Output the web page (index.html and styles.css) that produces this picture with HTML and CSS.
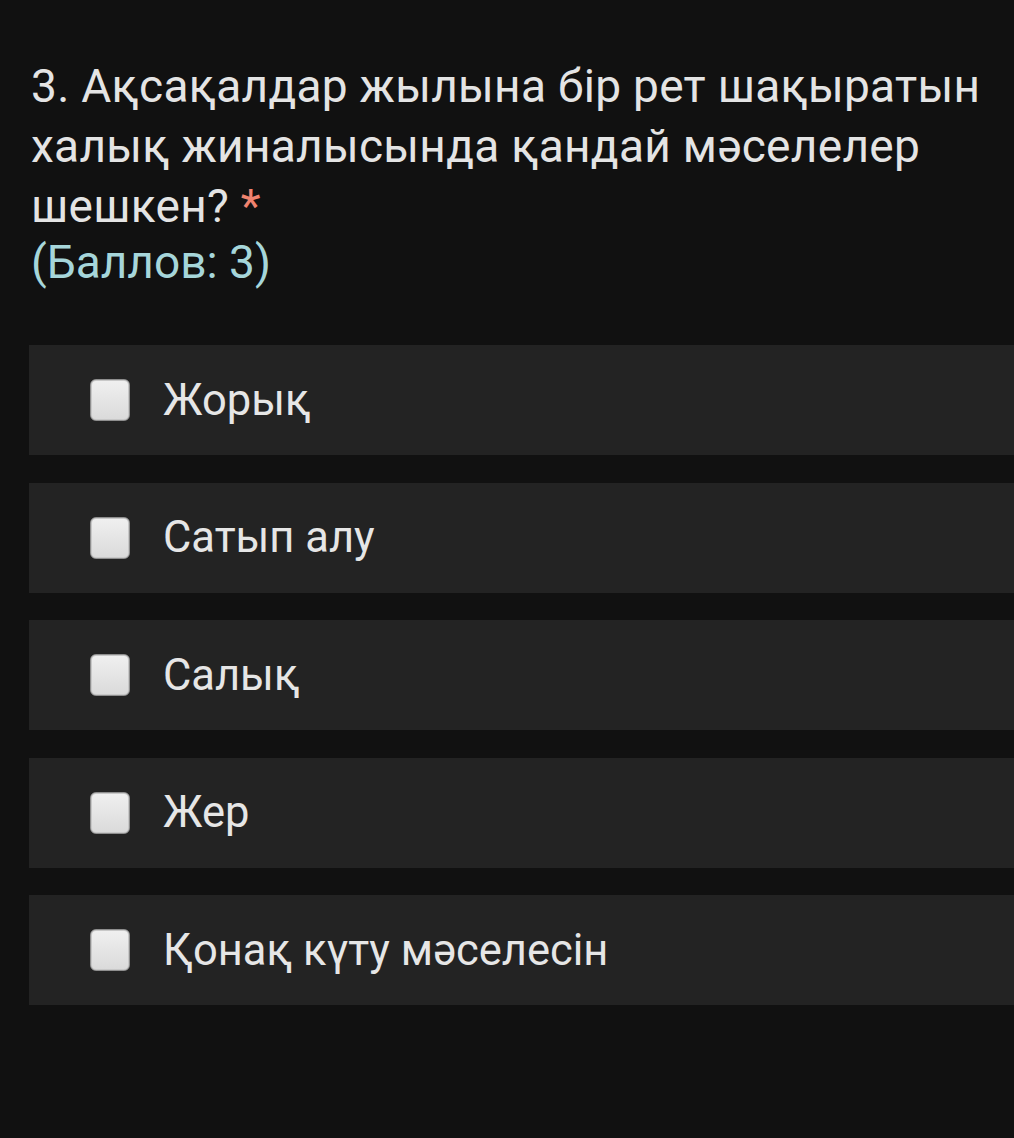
FILE: index.html
```html
<!DOCTYPE html>
<html lang="kk">
<head>
<meta charset="utf-8">
<link rel="stylesheet" href="styles.css">
</head>
<body>
<div class="question">
  <div class="title">3. Ақсақалдар жылына бір рет шақыратын халық жиналысында қандай мәселелер шешкен? <span class="req">*</span></div>
  <div class="points">(Баллов: 3)</div>
</div>
<div class="options">
  <label class="option"><span class="box"></span><span class="text">Жорық</span></label>
  <label class="option"><span class="box"></span><span class="text">Сатып алу</span></label>
  <label class="option"><span class="box"></span><span class="text">Салық</span></label>
  <label class="option"><span class="box"></span><span class="text">Жер</span></label>
  <label class="option"><span class="box"></span><span class="text">Қонақ күту мәселесін</span></label>
</div>
</body>
</html>
```

FILE: styles.css
```css
html, body {
  margin: 0;
  padding: 0;
  background: #111111;
  width: 1014px;
  height: 1138px;
  overflow: hidden;
}
body {
  font-family: Roboto, "Noto Sans", sans-serif;
  color: #e4e4e4;
}
.question {
  padding: 56px 20px 0 31px;
}
.title {
  font-size: 46px;
  line-height: 60px;
  letter-spacing: 0.3px;
}
.req {
  color: #f0836f;
}
.points {
  font-size: 46px;
  line-height: 52px;
  color: #a6d6da;
}
.options {
  margin: 57px 0 0 29px;
  display: flex;
  flex-direction: column;
  gap: 27.5px;
}
.option {
  display: flex;
  align-items: center;
  height: 110px;
  background: #232323;
  padding-left: 61px;
}
.box {
  width: 38px;
  height: 40px;
  border: 1px solid #8e8e8e;
  border-radius: 6px;
  background: linear-gradient(#f0f0f0, #dadada);
  box-shadow: inset 0 0 0 1px #c8c8c8;
  flex: none;
}
.text {
  margin-left: 33px;
  font-size: 43.5px;
  color: #e6e6e6;
}
```
